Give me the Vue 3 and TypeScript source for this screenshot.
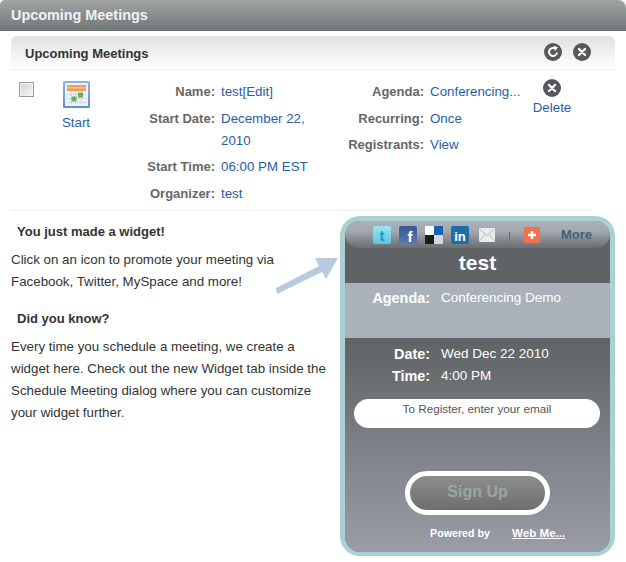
<script setup lang="ts">
interface Field { label: string; lines: string }
const leftFields: Field[] = [
  { label: 'Name:', lines: 'test[Edit]' },
  { label: 'Start Date:', lines: 'December 22, 2010' },
  { label: 'Start Time:', lines: '06:00 PM EST' },
  { label: 'Organizer:', lines: 'test' },
]
const rightFields: Field[] = [
  { label: 'Agenda:', lines: 'Conferencing...' },
  { label: 'Recurring:', lines: 'Once' },
  { label: 'Registrants:', lines: 'View' },
]
</script>

<template>
  <div class="page">
    <header class="topbar">Upcoming Meetings</header>
    <section class="panel">
      <div class="panel-head">
        <h2>Upcoming Meetings</h2>
        <svg class="round" viewBox="0 0 18 18" width="18" height="18">
          <circle cx="9" cy="9" r="9" fill="#55595b" />
          <path d="M13 9.5A4 4 0 1 1 10.5 5.3" fill="none" stroke="#fff" stroke-width="2" />
          <path d="M9.5 2.8 14 4.2 11 8z" fill="#fff" />
        </svg>
        <svg class="round" viewBox="0 0 18 18" width="18" height="18">
          <circle cx="9" cy="9" r="9" fill="#55595b" />
          <path d="M6 6l6 6M12 6l-6 6" stroke="#fff" stroke-width="2.4" stroke-linecap="round" />
        </svg>
      </div>

      <div class="meeting">
        <input class="check" type="checkbox" />
        <a class="start">
          <svg viewBox="0 0 27 27" width="27" height="27">
            <defs>
              <linearGradient id="calFrame" x1="0" y1="0" x2="0" y2="1">
                <stop offset="0" stop-color="#8fb4e2" />
                <stop offset="1" stop-color="#5f8fcf" />
              </linearGradient>
            </defs>
            <rect width="27" height="27" rx="1.5" fill="url(#calFrame)" />
            <rect x="2" y="2" width="23" height="23" fill="#eef3fa" />
            <rect x="4" y="4" width="19" height="6" fill="#ef9a55" />
            <rect x="4" y="6.4" width="19" height="1" fill="#fbd9a8" />
            <path d="M4 13.5h19M4 17.5h19M4 21.5h19M8 10v13M13 10v13M18 10v13" stroke="#b6c6e2" stroke-width="1" stroke-dasharray="1 1" />
            <rect x="15" y="11.5" width="5" height="5" fill="#6fa964" />
            <rect x="8.5" y="15.5" width="5" height="5" fill="#6fa964" />
          </svg>
          <span>Start</span>
        </a>
        <dl class="fields left">
          <template v-for="f in leftFields" :key="f.label">
            <dt>{{ f.label }}</dt>
            <dd>{{ f.lines }}</dd>
          </template>
        </dl>
        <dl class="fields right">
          <template v-for="f in rightFields" :key="f.label">
            <dt>{{ f.label }}</dt>
            <dd>{{ f.lines }}</dd>
          </template>
        </dl>
        <a class="delete">
          <svg viewBox="0 0 18 18" width="18" height="18">
            <circle cx="9" cy="9" r="9" fill="#55595b" />
            <path d="M6 6l6 6M12 6l-6 6" stroke="#fff" stroke-width="2.4" stroke-linecap="round" />
          </svg>
          <span>Delete</span>
        </a>
      </div>
      <div class="rule"></div>

      <div class="lower">
        <div class="copy">
          <h3>You just made a widget!</h3>
          <p>Click on an icon to promote your meeting via<br />Facebook, Twitter, MySpace and more!</p>
          <h3 class="second">Did you know?</h3>
          <p>Every time you schedule a meeting, we create a<br />widget here. Check out the new Widget tab inside the<br />Schedule Meeting dialog where you can customize<br />your widget further.</p>
        </div>
        <svg class="arrow" viewBox="0 0 66 40" width="66" height="40">
          <polygon points="0,31 1,37 46,15 50,22 62,1 39,1 43,9" fill="#b7cbdc" />
        </svg>

        <aside class="widget">
          <div class="share">
            <svg viewBox="0 0 18 18" width="18" height="18">
              <defs>
                <linearGradient id="twBg" x1="0" y1="0" x2="0" y2="1">
                  <stop offset="0" stop-color="#9be4f5" />
                  <stop offset="1" stop-color="#5cc3e4" />
                </linearGradient>
              </defs>
              <rect width="18" height="18" rx="2" fill="url(#twBg)" />
              <text x="9" y="15" text-anchor="middle" class="glyph" font-size="15" fill="#2a93bd">t</text>
            </svg>
            <svg viewBox="0 0 18 18" width="18" height="18">
              <defs>
                <linearGradient id="fbBg" x1="0" y1="0" x2="0" y2="1">
                  <stop offset="0" stop-color="#3a5795" />
                  <stop offset="1" stop-color="#5a78b4" />
                </linearGradient>
              </defs>
              <rect width="18" height="18" rx="2" fill="url(#fbBg)" />
              <text x="11" y="16" text-anchor="middle" class="glyph" font-size="15" fill="#fff">f</text>
            </svg>
            <svg viewBox="0 0 18 18" width="18" height="18">
              <rect width="9" height="9" fill="#1c1c1c" y="9" />
              <rect width="9" height="9" fill="#fff" />
              <rect x="9" width="9" height="9" fill="#1a5fb4" />
              <rect x="9" y="9" width="9" height="9" fill="#d8d8d8" />
            </svg>
            <svg viewBox="0 0 18 18" width="18" height="18">
              <rect width="18" height="18" rx="2" fill="#1f6ea3" />
              <text x="9" y="14.5" text-anchor="middle" class="glyph" font-size="13" fill="#fff">in</text>
            </svg>
            <svg class="mail" viewBox="0 0 16 14" width="16" height="14">
              <rect width="16" height="14" rx="1" fill="#e9ecec" />
              <path d="M0.5 1 8 7.5 15.5 1M0.5 13 6 6.5M15.5 13 10 6.5" fill="none" stroke="#b4babb" stroke-width="1" />
            </svg>
            <span class="sep"></span>
            <svg class="plus" viewBox="0 0 16 16" width="16" height="16">
              <rect width="16" height="16" rx="2" fill="#f0714f" />
              <path d="M8 4v8M4 8h8" stroke="#fff" stroke-width="2.4" />
            </svg>
            <span class="more">More</span>
          </div>
          <div class="title">test</div>
          <div class="agenda">
            <div class="w-row"><b>Agenda:</b><span>Conferencing Demo</span></div>
          </div>
          <div class="body">
            <div class="w-row"><b>Date:</b><span>Wed Dec 22 2010</span></div>
            <div class="w-row"><b>Time:</b><span>4:00 PM</span></div>
            <div class="email">To Register, enter your email</div>
            <button class="signup" type="button">Sign Up</button>
            <div class="powered"><span>Powered by</span><a>Web Me...</a></div>
          </div>
        </aside>
      </div>
    </section>
  </div>
</template>

<style>
html, body { margin: 0; background: #fff; }
</style>

<style scoped>
.page {
  width: 626px;
  height: 562px;
  overflow: hidden;
  background: #fff;
  font-family: "Liberation Sans", Arial, sans-serif;
  font-size: 13.33px;
  color: #333;
}
.topbar {
  height: 31px;
  box-sizing: border-box;
  padding: 7px 0 0 11px;
  border-radius: 5px 8px 0 0;
  border-bottom: 1px solid #6c7270;
  background: linear-gradient(#a0a5a4, #72787a);
  color: #f2f2f2;
  font-size: 14.4px;
  font-weight: bold;
  line-height: 17px;
}
.panel { margin: 5px 11px 0; }
.panel-head {
  height: 34px;
  box-sizing: border-box;
  display: flex;
  align-items: center;
  gap: 11px;
  padding: 0 24px 0 14px;
  border-radius: 6px 6px 0 0;
  border-bottom: 1px solid #eee;
  background: linear-gradient(#e1e1e1, #fff);
}
.panel-head h2 {
  flex: 1;
  margin: 2px 0 0;
  font-size: 13px;
  line-height: 17px;
  color: #333;
}
.panel-head svg { margin-top: -2px; }
.meeting {
  height: 140px;
  box-sizing: border-box;
  display: flex;
  align-items: flex-start;
  padding-top: 11px;
}
.check {
  appearance: none;
  flex: none;
  width: 15px;
  height: 15px;
  margin: 1px 0 0 8px;
  box-sizing: border-box;
  border: 1px solid #9a9a9a;
  background: linear-gradient(135deg, #d2d2d2, #f5f5f5);
  box-shadow: inset 0 0 0 1px #f3f3f3;
}
.start {
  flex: none;
  width: 62px;
  margin-left: 11px;
  display: flex;
  flex-direction: column;
  align-items: center;
  gap: 7px;
  color: #2a5da6;
  line-height: 15px;
}
.start svg { display: block; }
.fields {
  flex: none;
  margin: 0;
  display: grid;
  column-gap: 6px;
  row-gap: 4.5px;
  line-height: 22px;
}
.fields.left { grid-template-columns: 108px 93px; }
.fields.right { grid-template-columns: 104px 96px; margin-left: 6px; }
.fields dt {
  text-align: right;
  font-size: 13px;
  font-weight: bold;
  color: #666;
}
.fields dd {
  margin: 0;
  color: #2a5da6;
}
.delete {
  flex: none;
  width: 40px;
  margin: -2px 0 0 6px;
  display: flex;
  flex-direction: column;
  align-items: center;
  color: #2a5da6;
  line-height: 22px;
}
.delete svg { display: block; flex: none; }
.rule {
  width: 581px;
  height: 1px;
  background: #eee;
}
.lower {
  position: relative;
  display: flex;
  justify-content: space-between;
  padding-top: 5px;
}
.copy {
  width: 328px;
  line-height: 22px;
}
.copy h3 {
  margin: 5px 0 6px 6px;
  font-size: 13px;
  line-height: 22px;
  color: #333;
}
.copy .second { margin-top: 15px; }
.copy p { margin: 0; }
.arrow {
  position: absolute;
  left: 265px;
  top: 46px;
}
.widget {
  width: 275px;
  height: 340px;
  flex: none;
  box-sizing: border-box;
  border: 5px solid #a9d0d2;
  border-bottom-width: 4px;
  border-radius: 20px;
  overflow: hidden;
  display: flex;
  flex-direction: column;
  background: #5f6365;
}
.share {
  height: 27px;
  flex: none;
  box-sizing: border-box;
  display: flex;
  align-items: center;
  gap: 8px;
  padding-left: 28px;
  border-radius: 0 0 14px 14px;
  background: linear-gradient(#abb1ba 0%, #a4a9b0 35%, #6a6e70 100%);
}
.share svg { flex: none; display: block; }
.glyph { font-family: "Liberation Sans", Arial, sans-serif; font-weight: bold; }
.share .mail { margin-left: 2px; }
.sep { width: 1px; height: 9px; margin: 3px 6px 0 6px; background: #5d6b85; }
.share .more {
  margin-left: 13px;
  font-size: 13px;
  font-weight: bold;
  color: #3f6474;
}
.title {
  height: 35px;
  flex: none;
  text-align: center;
  color: #fff;
  font-size: 21px;
  font-weight: bold;
  line-height: 30px;
}
.agenda {
  height: 55px;
  flex: none;
  box-sizing: border-box;
  padding-top: 4px;
  background: #aab1ba;
}
.w-row {
  display: flex;
  gap: 11px;
  height: 22px;
  line-height: 22px;
  color: #fff;
}
.w-row b {
  width: 85px;
  text-align: right;
  font-size: 14.4px;
}
.w-row span { font-size: 13.5px; }
.body {
  flex: 1;
  padding-top: 5px;
  background: linear-gradient(#5f6365, #9a9da6);
  display: flex;
  flex-direction: column;
}
.email {
  width: 246px;
  height: 29px;
  margin: 12px 0 0 9px;
  box-sizing: border-box;
  border-radius: 15px;
  background: #fff;
  text-align: center;
  font-size: 11.7px;
  line-height: 20px;
  color: #555;
}
.signup {
  width: 145px;
  height: 44px;
  margin: 43px 0 0 60px;
  padding: 0 0 2px;
  box-sizing: border-box;
  border: 5px solid #fff;
  border-radius: 22px;
  background: linear-gradient(#8d8d8d, #6e6e6e);
  font-family: inherit;
  font-size: 16px;
  font-weight: bold;
  color: #9ba5a5;
}
.powered {
  display: flex;
  gap: 22px;
  margin: 10px 0 0 85px;
  font-size: 10.7px;
  font-weight: bold;
  line-height: 16px;
  color: #fff;
}
.powered a { text-decoration: underline; font-size: 11.6px; }
</style>
